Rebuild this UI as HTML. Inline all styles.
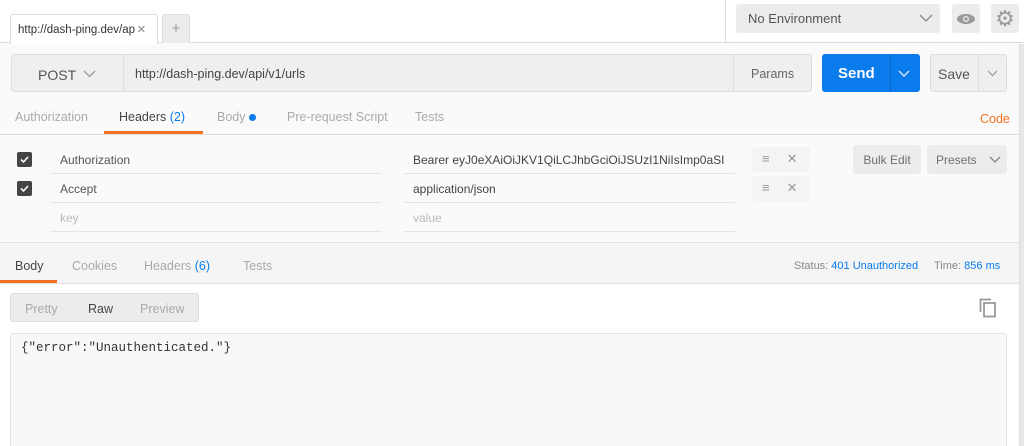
<!DOCTYPE html>
<html><head><meta charset="utf-8"><style>
*{box-sizing:border-box;margin:0;padding:0}
html,body{width:1024px;height:446px;overflow:hidden}
body{background:#fafafa;font-family:"Liberation Sans",sans-serif;font-size:12px;color:#505050;position:relative}
.a{position:absolute}
.btn{position:absolute;background:#ececec;border-radius:3px;display:flex;align-items:center;justify-content:center;color:#707070}
</style></head><body>
<div class="a" style="left:0;top:0;width:1024px;height:43px;background:#fff;border-bottom:1px solid #ddd"></div>
<div class="a" style="left:10px;top:14px;width:148px;height:30px;background:#fff;border:1px solid #ddd;border-bottom:none;border-radius:3px 3px 0 0;padding:9px 7px;font-size:11.5px;color:#333;white-space:nowrap;overflow:hidden"><span style="display:inline-block;width:117px;overflow:hidden;vertical-align:top">http://dash-ping.dev/api</span><span class="a" style="left:126px;top:6px;color:#888;font-size:15px">×</span></div>
<div class="a" style="left:162px;top:14px;width:28px;height:29px;background:#ececec;border:1px solid #ddd;border-bottom:none;border-radius:3px 3px 0 0;text-align:center;line-height:28px;color:#999;font-size:15px">+</div>
<div class="a" style="left:725px;top:0;width:1px;height:43px;background:#ddd"></div>
<div class="btn" style="left:736px;top:4px;width:204px;height:29px;justify-content:flex-start;padding-left:12px;font-size:13px;color:#555">No Environment<svg class="a" style="left:183px;top:10px" width="14" height="9"><path d="M1 1l6 6 6-6" stroke="#888" fill="none" stroke-width="1.3"/></svg></div>
<div class="btn" style="left:952px;top:4px;width:28px;height:29px"><svg width="20" height="12"><ellipse cx="10" cy="6" rx="9" ry="5" fill="#999"/><circle cx="10" cy="6" r="3" fill="#ececec"/><circle cx="10" cy="6" r="1.7" fill="#999"/></svg></div>
<div class="btn" style="left:991px;top:4px;width:28px;height:29px;font-size:22px;color:#999">⚙</div>
<div class="a" style="left:1019px;top:44px;width:5px;height:402px;background:#e8e8e8;border-left:1px solid #ddd"></div>

<div class="a" style="left:11px;top:54px;width:801px;height:38px;background:#efefef;border:1px solid #ddd;border-radius:3px"></div>
<div class="a" style="left:123px;top:55px;width:1px;height:37px;background:#ddd"></div>
<div class="a" style="left:733px;top:55px;width:1px;height:37px;background:#ddd"></div>
<div class="a" style="left:38px;top:67px;font-size:14px;color:#555">POST</div>
<svg class="a" style="left:83px;top:70px" width="13" height="8"><path d="M1 1l5.5 5.5L12 1" stroke="#999" fill="none" stroke-width="1.3"/></svg>
<div class="a" style="left:135px;top:67px;font-size:12.5px;color:#444">http://dash-ping.dev/api/v1/urls</div>
<div class="a" style="left:751px;top:67px;font-size:12.5px;color:#666">Params</div>
<div class="a" style="left:822px;top:54px;width:98px;height:38px;background:#097bed;border-radius:3px"></div>
<div class="a" style="left:890px;top:54px;width:1px;height:38px;background:#0a66c4"></div>
<div class="a" style="left:838px;top:65px;font-size:15px;font-weight:bold;color:#fff">Send</div>
<svg class="a" style="left:898px;top:70px" width="12" height="7"><path d="M1 1l5 5 5-5" stroke="#cfe3fb" fill="none" stroke-width="1.5"/></svg>
<div class="a" style="left:930px;top:54px;width:77px;height:38px;background:#efefef;border:1px solid #ddd;border-radius:3px"></div>
<div class="a" style="left:978px;top:55px;width:1px;height:37px;background:#ddd"></div>
<div class="a" style="left:938px;top:66px;font-size:14px;color:#555">Save</div>
<svg class="a" style="left:987px;top:70px" width="11" height="7"><path d="M1 1l4.5 4.5L10 1" stroke="#999" fill="none" stroke-width="1.2"/></svg>

<div class="a" style="left:0;top:134px;width:1019px;height:1px;background:#ddd"></div>
<div class="a" style="left:104px;top:131px;width:99px;height:3px;background:#f47023"></div>
<div class="a" style="top:110px;left:15px;font-size:12.5px;color:#aaa">Authorization</div>
<div class="a" style="top:110px;left:119px;font-size:12.5px;color:#444">Headers <span style="color:#097bed">(2)</span></div>
<div class="a" style="top:110px;left:217px;font-size:12.5px;color:#aaa">Body <span style="display:inline-block;width:7px;height:7px;border-radius:50%;background:#097bed"></span></div>
<div class="a" style="top:110px;left:287px;font-size:12.5px;color:#aaa">Pre-request Script</div>
<div class="a" style="top:110px;left:415px;font-size:12.5px;color:#aaa">Tests</div>
<div class="a" style="top:112px;left:980px;font-size:12.5px;color:#f47023">Code</div>

<div class="a" style="left:17px;top:152px;width:15px;height:15px;background:#444;border-radius:2px"><svg width="15" height="15"><path d="M4 7.5l2.5 2.5L11 5" stroke="#fff" fill="none" stroke-width="1.6"/></svg></div>
<div class="a" style="left:17px;top:181px;width:15px;height:15px;background:#444;border-radius:2px"><svg width="15" height="15"><path d="M4 7.5l2.5 2.5L11 5" stroke="#fff" fill="none" stroke-width="1.6"/></svg></div>
<div class="a" style="left:50px;top:173px;width:332px;height:1px;background:#e5e5e5"></div>
<div class="a" style="left:50px;top:202px;width:332px;height:1px;background:#e5e5e5"></div>
<div class="a" style="left:50px;top:231px;width:332px;height:1px;background:#e5e5e5"></div>
<div class="a" style="left:404px;top:173px;width:331px;height:1px;background:#e5e5e5"></div>
<div class="a" style="left:404px;top:202px;width:331px;height:1px;background:#e5e5e5"></div>
<div class="a" style="left:404px;top:231px;width:331px;height:1px;background:#e5e5e5"></div>
<div class="a" style="left:60px;top:153px;color:#555">Authorization</div>
<div class="a" style="left:60px;top:182px;color:#555">Accept</div>
<div class="a" style="left:60px;top:211px;color:#bbb">key</div>
<div class="a" style="left:413px;top:153px;color:#444">Bearer eyJ0eXAiOiJKV1QiLCJhbGciOiJSUzI1NiIsImp0aSI</div>
<div class="a" style="left:413px;top:182px;color:#444">application/json</div>
<div class="a" style="left:413px;top:211px;color:#bbb">value</div>
<div class="a" style="left:752px;top:147px;width:58px;height:25px;background:#f4f4f4;border-radius:3px;color:#999;font-size:13px;padding:4px 0 0 10px">≡<span style="margin-left:17px">✕</span></div>
<div class="a" style="left:752px;top:176px;width:58px;height:25px;background:#f4f4f4;border-radius:3px;color:#999;font-size:13px;padding:4px 0 0 10px">≡<span style="margin-left:17px">✕</span></div>
<div class="btn" style="left:853px;top:145px;width:68px;height:29px;font-size:12px">Bulk Edit</div>
<div class="btn" style="left:927px;top:145px;width:80px;height:29px;font-size:12px;justify-content:flex-start;padding-left:9px">Presets<svg style="margin-left:12px" width="12" height="7"><path d="M1 1l5 5 5-5" stroke="#888" fill="none" stroke-width="1.3"/></svg></div>

<div class="a" style="left:0;top:242px;width:1019px;height:42px;background:#f5f5f5;border-top:1px solid #e3e3e3;border-bottom:1px solid #e3e3e3"></div>
<div class="a" style="left:0;top:280px;width:57px;height:3px;background:#f47023"></div>
<div class="a" style="top:259px;left:15px;font-size:12.5px;color:#444">Body</div>
<div class="a" style="top:259px;left:72px;font-size:12.5px;color:#aaa">Cookies</div>
<div class="a" style="top:259px;left:144px;font-size:12.5px;color:#aaa">Headers <span style="color:#097bed">(6)</span></div>
<div class="a" style="top:259px;left:243px;font-size:12.5px;color:#aaa">Tests</div>
<div class="a" style="top:260px;left:794px;font-size:11px;color:#888">Status: <span style="color:#097bed">401 Unauthorized</span></div>
<div class="a" style="top:260px;left:934px;font-size:11px;color:#888">Time: <span style="color:#097bed">856 ms</span></div>

<div class="a" style="left:0;top:285px;width:1019px;height:161px;background:#fff"></div>
<div class="a" style="left:10px;top:293px;width:189px;height:29px;background:#ececec;border:1px solid #ddd;border-radius:3px"></div>
<div class="a" style="left:25px;top:302px;color:#aaa;font-size:12.5px">Pretty</div>
<div class="a" style="left:88px;top:302px;color:#444;font-size:12.5px">Raw</div>
<div class="a" style="left:140px;top:302px;color:#aaa;font-size:12.5px">Preview</div>
<svg class="a" style="left:979px;top:298px" width="18" height="20"><path d="M1.5 14V1.5H12" stroke="#999" fill="none" stroke-width="1.8"/><rect x="5" y="5" width="11" height="13.5" fill="none" stroke="#999" stroke-width="1.8"/></svg>
<div class="a" style="left:10px;top:333px;width:997px;height:113px;background:#f8f8f8;border:1px solid #e3e3e3;border-bottom:none;border-radius:3px 3px 0 0"></div>
<div class="a" style="left:21px;top:341px;font-family:'Liberation Mono',monospace;font-size:12.5px;color:#333">{"error":"Unauthenticated."}</div>
</body></html>
